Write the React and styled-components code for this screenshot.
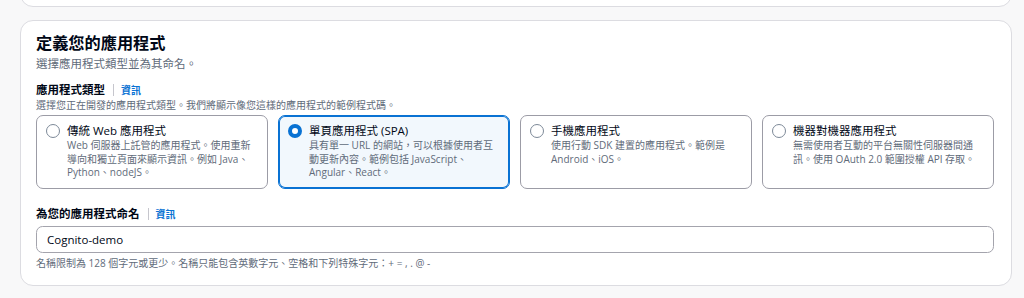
import React from "react";
import styled, { createGlobalStyle } from "styled-components";

const Global = createGlobalStyle`
  html, body { margin: 0; padding: 0; background: #f8f8f9; }
  body {
    font-family: "Open Sans", "Noto Sans CJK TC", sans-serif;
    color: #000716;
    overflow: hidden;
  }
  * { box-sizing: border-box; }
`;

const Page = styled.div`
  display: flex;
  flex-direction: column;
  gap: 13px;
  padding: 0 12px 0 20px;
  height: 298px;
  font-family: "Open Sans", "Noto Sans CJK TC", sans-serif;
`;

const Card = styled.section`
  background: #ffffff;
  border: 1px solid #dcdce1;
  border-radius: 13px;
  padding: 12px 17px 15px 15px;
  ${(p) => (p.$clipped ? "height: 40px; margin-top: -33px; flex: none;" : "")}
`;

const Title = styled.h2`
  margin: 0;
  font-size: 16.2px;
  line-height: 21px;
  font-weight: 700;
  color: #000716;
`;

const Subtitle = styled.p`
  margin: 2px 0 0;
  font-size: 11.5px;
  line-height: 15px;
  color: #5f6b7a;
  font-family: "Noto Sans CJK TC", sans-serif;
`;

const LabelRow = styled.div`
  display: flex;
  align-items: center;
  margin-top: ${(p) => p.$top}px;
  height: 16px;
`;

const Label = styled.span`
  font-size: 11.5px;
  line-height: 16px;
  font-weight: 700;
  color: #000716;
`;

const Divider = styled.span`
  width: 1px;
  height: 12px;
  background: #c6c6cd;
  margin: 0 7px 0 8px;
`;

const InfoLink = styled.a`
  font-size: 10px;
  line-height: 16px;
  font-weight: 700;
  color: #0972d3;
  text-decoration: none;
`;

const Hint = styled.p`
  margin: ${(p) => p.$top || 0}px 0 0;
  font-size: 10px;
  line-height: ${(p) => p.$lh || 14}px;
  color: #5f6b7a;
`;

const Tiles = styled.div`
  display: grid;
  grid-template-columns: repeat(4, 1fr);
  gap: 10px;
  margin-top: 3px;
`;

const Tile = styled.label`
  display: flex;
  align-items: flex-start;
  gap: 7px;
  padding: 7px 14px 8px 9px;
  border: 1px solid ${(p) => (p.$selected ? "#0972d3" : "#9c9ca6")};
  box-shadow: ${(p) => (p.$selected ? "inset 0 0 0 1px #0972d3" : "none")};
  background: ${(p) => (p.$selected ? "#f2f8fd" : "#ffffff")};
  border-radius: 7px;
  cursor: pointer;
`;

const Radio = styled.span`
  flex: none;
  width: 14px;
  height: 14px;
  margin-top: 1px;
  border-radius: 50%;
  background: #ffffff;
  border: ${(p) => (p.$checked ? "4px solid #0972d3" : "1px solid #7d8998")};
`;

const TileBody = styled.div`
  display: flex;
  flex-direction: column;
  min-width: 0;
`;

const TileTitle = styled.span`
  font-size: 11.5px;
  line-height: 16px;
  color: #000716;
`;

const TileDesc = styled.span`
  font-size: 10px;
  line-height: 13.5px;
  color: #5f6b7a;
`;

const Input = styled.input`
  display: block;
  width: 100%;
  height: 27px;
  margin-top: 4px;
  padding: 0 10px;
  border: 1px solid #a4a4ad;
  border-radius: 6.5px;
  background: #ffffff;
  font-family: "Open Sans", "Noto Sans CJK TC", sans-serif;
  font-size: 11.5px;
  color: #000716;
  outline: none;
`;

const tiles = [
  {
    title: "傳統 Web 應用程式",
    desc: "Web 伺服器上託管的應用程式。使用重新導向和獨立頁面來顯示資訊。例如 Java、Python、nodeJS。",
  },
  {
    title: "單頁應用程式 (SPA)",
    desc: "具有單一 URL 的網站，可以根據使用者互動更新內容。範例包括 JavaScript、Angular、React。",
    selected: true,
  },
  {
    title: "手機應用程式",
    desc: "使用行動 SDK 建置的應用程式。範例是 Android、iOS。",
  },
  {
    title: "機器對機器應用程式",
    desc: "無需使用者互動的平台無關性伺服器間通訊。使用 OAuth 2.0 範圍授權 API 存取。",
  },
];

export default function App() {
  return (
    <>
      <Global />
      <Page lang="zh-Hant-TW">
        <Card $clipped />
        <Card>
          <Title>定義您的應用程式</Title>
          <Subtitle>選擇應用程式類型並為其命名。</Subtitle>

          <LabelRow $top={11}>
            <Label>應用程式類型</Label>
            <Divider />
            <InfoLink href="#">資訊</InfoLink>
          </LabelRow>
          <Hint>選擇您正在開發的應用程式類型。我們將顯示像您這樣的應用程式的範例程式碼。</Hint>

          <Tiles>
            {tiles.map((t) => (
              <Tile key={t.title} $selected={t.selected}>
                <Radio $checked={t.selected} />
                <TileBody>
                  <TileTitle>{t.title}</TileTitle>
                  <TileDesc>{t.desc}</TileDesc>
                </TileBody>
              </Tile>
            ))}
          </Tiles>

          <LabelRow $top={17}>
            <Label>為您的應用程式命名</Label>
            <Divider />
            <InfoLink href="#">資訊</InfoLink>
          </LabelRow>
          <Input defaultValue="Cognito-demo" />
          <Hint $top={4} $lh={13.5}>
            名稱限制為 128 個字元或更少。名稱只能包含英數字元、空格和下列特殊字元：+ = , . @ -
          </Hint>
        </Card>
      </Page>
    </>
  );
}
